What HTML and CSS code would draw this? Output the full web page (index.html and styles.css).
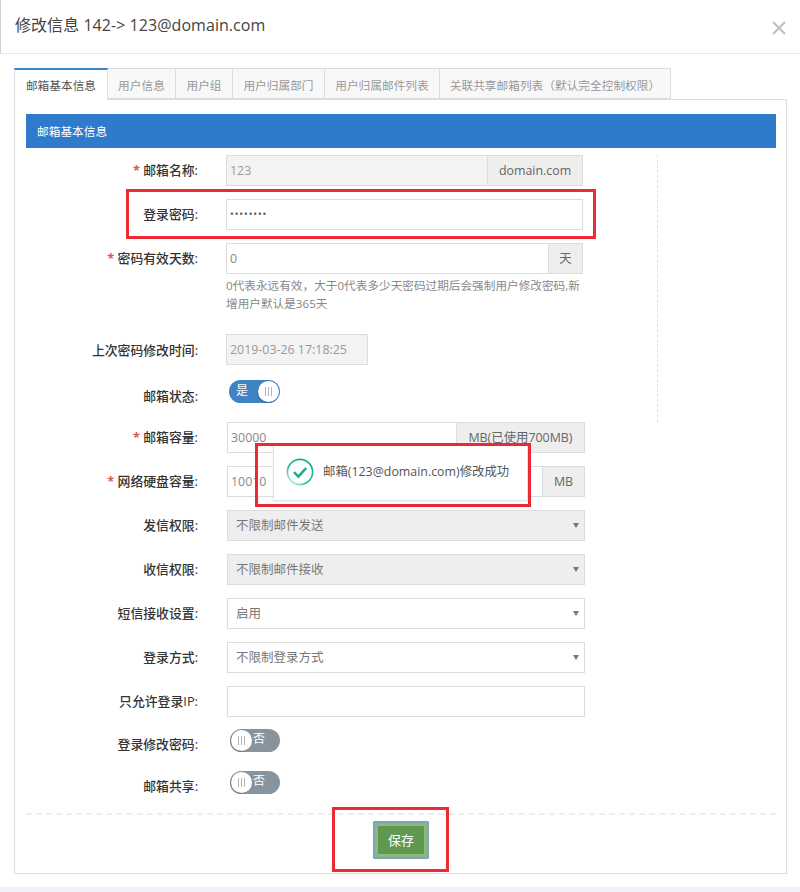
FILE: index.html
```html
<!DOCTYPE html>
<html lang="zh-CN">
<head>
<meta charset="utf-8">
<title>修改信息</title>
<link rel="stylesheet" href="styles.css">
</head>
<body>
<div class="modal">
  <header class="modal-head">
    <h1 class="modal-title">修改信息 142-&gt; 123@domain.com</h1>
    <svg class="close" width="14" height="14" viewBox="0 0 14 14"><path d="M1 1 L13 13 M13 1 L1 13" stroke="#c4c4c4" stroke-width="2.4" fill="none"/></svg>
  </header>
  <div class="modal-body">
    <ul class="tabs">
      <li class="tab active t1">邮箱基本信息</li>
      <li class="tab t2">用户信息</li>
      <li class="tab t3">用户组</li>
      <li class="tab t4">用户归属部门</li>
      <li class="tab t5">用户归属邮件列表</li>
      <li class="tab t6">关联共享邮箱列表（默认完全控制权限）</li>
    </ul>
    <div class="pane">
      <div class="bar">邮箱基本信息</div>
      <form class="form">
        <div class="section-a">
          <div class="row">
            <label class="label"><span class="req">*</span> 邮箱名称:</label>
            <div class="group w357">
              <input class="input grow off" value="123" disabled>
              <span class="addon a96">domain.com</span>
            </div>
          </div>
          <div class="row">
            <label class="label">登录密码:</label>
            <div class="group w357"><input class="input grow dots" value="••••••••"></div>
          </div>
          <div class="row tight">
            <label class="label"><span class="req">*</span> 密码有效天数:</label>
            <div class="group w357">
              <input class="input grow" value="0">
              <span class="addon a35">天</span>
            </div>
          </div>
          <p class="help">0代表永远有效，大于0代表多少天密码过期后会强制用户修改密码,新<br>增用户默认是365天</p>
          <div class="row date-row">
            <label class="label">上次密码修改时间:</label>
            <div class="group w142"><input class="input grow off" value="2019-03-26 17:18:25" disabled></div>
          </div>
          <div class="row switch-row">
            <label class="label">邮箱状态:</label>
            <div class="switch on"><span class="sw-text">是</span><span class="knob"><i></i><i></i><i></i></span></div>
          </div>
        </div>
        <div class="section-b">
          <div class="row">
            <label class="label"><span class="req">*</span> 邮箱容量:</label>
            <div class="group w358">
              <input class="input grow" value="30000">
              <span class="addon a129">MB(已使用700MB)</span>
            </div>
          </div>
          <div class="row">
            <label class="label"><span class="req">*</span> 网络硬盘容量:</label>
            <div class="group w358">
              <input class="input grow" value="10010">
              <span class="addon a43">MB</span>
            </div>
          </div>
          <div class="row">
            <label class="label">发信权限:</label>
            <div class="select w358 off"><select disabled><option>不限制邮件发送</option></select></div>
          </div>
          <div class="row">
            <label class="label">收信权限:</label>
            <div class="select w358 off"><select disabled><option>不限制邮件接收</option></select></div>
          </div>
          <div class="row">
            <label class="label">短信接收设置:</label>
            <div class="select w358"><select><option>启用</option></select></div>
          </div>
          <div class="row">
            <label class="label">登录方式:</label>
            <div class="select w358"><select><option>不限制登录方式</option></select></div>
          </div>
          <div class="row r-ip">
            <label class="label">只允许登录IP:</label>
            <div class="group w358"><input class="input grow" value=""></div>
          </div>
          <div class="row r-sw1">
            <label class="label">登录修改密码:</label>
            <div class="switch off"><span class="knob"><i></i><i></i><i></i></span><span class="sw-text">否</span></div>
          </div>
          <div class="row r-sw2">
            <label class="label">邮箱共享:</label>
            <div class="switch off"><span class="knob"><i></i><i></i><i></i></span><span class="sw-text">否</span></div>
          </div>
        </div>
        <div class="actions">
          <button type="button" class="save">保存</button>
        </div>
      </form>
    </div>
  </div>
  <div class="strip"></div>
</div>

<div class="toast">
  <svg class="toast-icon" width="28" height="28" viewBox="0 0 28 28">
    <defs><linearGradient id="ring" x1="0.9" y1="0.1" x2="0.2" y2="1"><stop offset="0" stop-color="#13a98a"/><stop offset="0.65" stop-color="#2dbb9f"/><stop offset="1" stop-color="#c6ece3"/></linearGradient></defs>
    <circle cx="14" cy="14" r="12.6" fill="none" stroke="url(#ring)" stroke-width="1.6"/>
    <path d="M8 14.2 L12.4 18.6 L20.2 10" fill="none" stroke="#14b08f" stroke-width="2.6"/>
  </svg>
  <span class="toast-text">邮箱(123@domain.com)修改成功</span>
</div>
<div class="mark m-pass"></div>
<div class="mark m-toast"></div>
<div class="mark m-save"></div>
</body>
</html>
```

FILE: styles.css
```css
* { box-sizing: border-box; }
html, body { margin: 0; padding: 0; }
body {
  width: 800px;
  height: 892px;
  overflow: hidden;
  background: #fff;
  position: relative;
  font-family: "Open Sans", "Noto Sans CJK SC", sans-serif;
  font-size: 13px;
  color: #555;
}
.modal { width: 800px; height: 892px; display: flex; flex-direction: column; }
.modal-head {
  height: 54px;
  flex: none;
  display: flex;
  justify-content: space-between;
  align-items: flex-start;
  padding: 15px 14px 0 14px;
  border-left: 1px solid #d0d0d0;
  border-bottom: 1px solid #e8e8e8;
}
.modal-title { margin: 0; font-size: 16px; font-weight: 400; line-height: 20px; color: #444; letter-spacing: 0.05px; }
.close { margin-top: 6px; }
.modal-body { flex: none; height: 833px; padding: 14px 13px 0 14px; }
.tabs { display: flex; list-style: none; margin: 0; padding: 0; height: 31px; }
.tab {
  height: 31px;
  font-size: 11.7px;
  line-height: 32px;
  text-align: center;
  color: #999;
  background: #f8f8f8;
  border: 1px solid #d8dde6;
  border-left: 0;
  white-space: nowrap;
}
.t1 { width: 94px; } .t2 { width: 68px; } .t3 { width: 57px; }
.t4 { width: 92px; } .t5 { width: 115px; } .t6 { width: 231px; }
.tab.active {
  color: #555;
  background: #fff;
  border-top: 2px solid #3a85c8;
  border-left: 1px solid #d8dde6;
  border-bottom: 0;
  line-height: 31px;
  height: 32px;
  position: relative;
}
.pane {
  height: 775px;
  padding: 14px 10px 0 11px;
  border: 1px solid #d8dde6;
}
.bar {
  height: 34px;
  background: #2f7bcb;
  color: #fff;
  font-size: 11.7px;
  line-height: 34px;
  padding-left: 11px;
}
.form { padding-top: 7px; }
.section-a {
  width: 632px;
  height: 267px;
  border-right: 1px dashed #e2e2e2;
}
.section-b { height: 391px; }
.row { display: flex; align-items: flex-start; height: 31px; margin-bottom: 13px; }
.row.tight { margin-bottom: 3px; }
.label {
  flex: none;
  width: 172px;
  margin-right: 28px;
  text-align: right;
  font-size: 12.85px;
  font-weight: 500;
  line-height: 31px;
  color: #333;
  white-space: nowrap;
}
.section-b .label { margin-right: 29px; }
.date-row .label, .switch-row .label { line-height: 32px; }
.req { color: #e0564a; font-weight: 700; }
.group { display: flex; height: 31px; }
.w357 { width: 357px; }
.w358 { width: 358px; }
.w142 { width: 142px; }
.input {
  height: 31px;
  min-width: 0;
  padding: 0 3px 1px 3px;
  border: 1px solid #dcdcdc;
  background: #fff;
  font: 400 12.4px "Open Sans", "Noto Sans CJK SC", sans-serif;
  color: #888;
  outline: 0;
  border-radius: 0;
}
.grow { flex: 1; }
.input.off { background: #f3f3f3; color: #999; }
.input.dots { color: #555; font-size: 10px; letter-spacing: 0.9px; }
.addon {
  flex: none;
  height: 31px;
  display: flex;
  align-items: center;
  justify-content: center;
  background: #eee;
  border: 1px solid #dcdcdc;
  margin-left: -1px;
  padding-bottom: 1px;
  font-size: 12.4px;
  color: #666;
  white-space: nowrap;
}
.a96 { width: 96px; } .a35 { width: 35px; } .a129 { width: 129px; } .a43 { width: 43px; }
.help {
  margin: 0 0 21px 200px;
  width: 357px;
  font-size: 11.65px;
  line-height: 18px;
  color: #888;
  white-space: nowrap;
}
.date-row { margin-bottom: 15px; }
.switch-row { margin-bottom: 0; }
.switch {
  width: 51px;
  height: 23px;
  margin-left: 3px;
  border-radius: 12px;
  background: #87949d;
  display: flex;
  align-items: center;
  color: #fff;
  font-size: 12px;
  flex: none;
}
.switch.off { width: 50px; }
.switch.on { background: #3f83c5; justify-content: space-between; padding-left: 7px; }
.sw-text { line-height: 20px; margin-left: 0; margin-top: -3px; }
.switch.on .sw-text { margin-top: -2px; }
.knob {
  width: 21px;
  height: 21px;
  margin: 0 1px;
  border-radius: 50%;
  background: #fff;
  display: flex;
  align-items: center;
  justify-content: center;
  gap: 2px;
  box-shadow: -1px 1px 0 rgba(60,70,80,.35);
}
.knob i { width: 1px; height: 9px; background: #b4b4b4; display: block; }
.select { position: relative; height: 31px; }
.select select {
  width: 100%;
  height: 31px;
  appearance: none;
  padding: 0 8px 2px 8px;
  border: 1px solid #dcdcdc;
  border-radius: 0;
  background: #fff;
  font: 400 12.5px "Noto Sans CJK SC", sans-serif;
  color: #777;
  opacity: 1;
  outline: 0;
}
.select.off select { background: #eee; }
.select::after {
  content: "";
  position: absolute;
  right: 6px;
  top: 13px;
  border-style: solid;
  border-color: #777 transparent transparent transparent;
  border-width: 5px 3px 0 3px;
}
.r-ip { margin-bottom: 12px; }
.r-sw1 { margin-bottom: 11px; }
.r-sw2 { margin-bottom: 0; }
.actions {
  height: 60px;
  border-top: 2px dashed #eceef0;
  display: flex;
  justify-content: center;
  padding: 6px 0 0 0;
}
.save {
  width: 56px;
  height: 38px;
  padding: 0 0 1px 0;
  background: #5f9950;
  border: 3px solid #8cb87c;
  outline: 2px solid #7da5c0;
  outline-offset: -2px;
  box-shadow: inset 0 0 0 2px #8cb87c;
  color: #fff;
  font: 400 13px "Noto Sans CJK SC", sans-serif;
  border-radius: 2px;
}
.strip { flex: 1; background: #eff3f7; }
.toast {
  position: absolute;
  left: 273px;
  top: 444px;
  width: 255px;
  height: 57px;
  background: #fff;
  border: 1px solid #e4e4e4;
  border-top: 0;
  display: flex;
  align-items: center;
  padding-left: 12px;
  gap: 9px;
  box-shadow: 0 1px 2px rgba(0,0,0,.08);
}
.toast-icon { flex: none; margin-top: -1px; }
.toast-text { font-size: 12.4px; color: #555; white-space: nowrap; padding-bottom: 2px; }
.mark { position: absolute; border: 3px solid #ec2a34; pointer-events: none; }
.m-pass { left: 126px; top: 189px; width: 470px; height: 50px; }
.m-toast { left: 255px; top: 443px; width: 276px; height: 64px; }
.m-save { left: 332px; top: 807px; width: 117px; height: 65px; }
```
